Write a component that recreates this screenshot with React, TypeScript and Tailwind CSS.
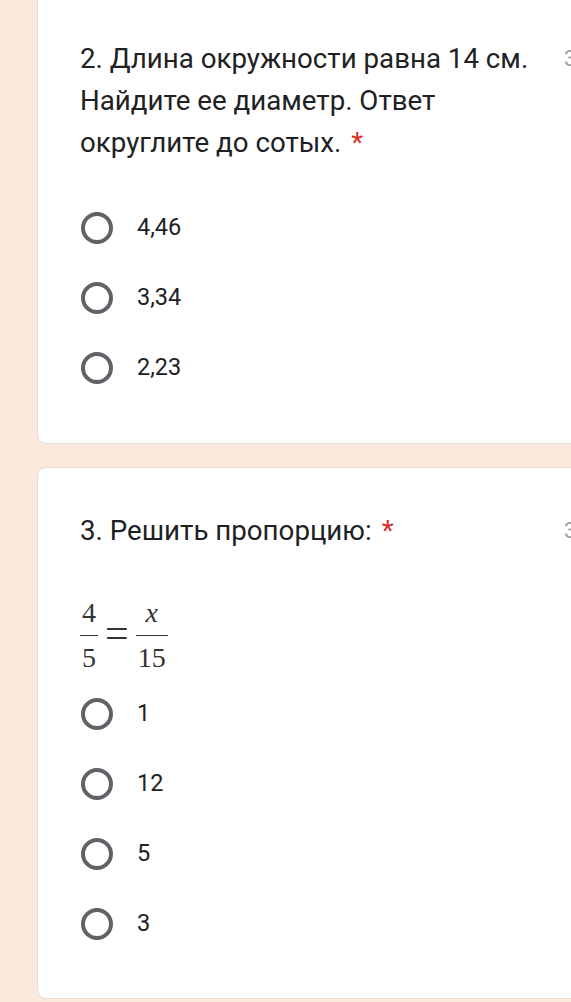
import React from "react";

const font = { fontFamily: "Roboto, 'Noto Sans', Arial, sans-serif" };

function Radio({ label }: { label: string }) {
  return (
    <div className="flex h-[70px] items-center">
      <div className="ml-[1px] h-[32px] w-[32px] shrink-0 rounded-full border-[4px] border-[#5f6368]" />
      <span className="ml-[24px] text-[23.5px] text-[#202124]">{label}</span>
    </div>
  );
}

function Title({ children }: { children: React.ReactNode }) {
  return (
    <div className="flex">
      <div className="w-[484px] shrink-0 pr-[12px] text-[27.7px] leading-[42px] text-[#202124]">
        {children}
        <span className="ml-[10px] text-[#d93025]">*</span>
      </div>
      <div className="text-[22px] leading-[42px] text-[#9aa0a6]">3 балла</div>
    </div>
  );
}

function Frac({ num, den, italic }: { num: string; den: string; italic?: boolean }) {
  return (
    <div className="flex flex-col items-center leading-none">
      <span className={`px-[2px] pb-[8px] text-[28px] ${italic ? "italic" : ""}`}>{num}</span>
      <div className="h-[1.5px] w-full bg-[#333]" />
      <span className="px-[2px] pt-[8px] text-[28px]">{den}</span>
    </div>
  );
}

export default function App() {
  return (
    <div className="w-[571px] h-[1002px] overflow-hidden bg-[#fce9dd]" style={font}>
      <div className="pl-[37px]">
        <div className="-mt-[10px] w-[640px] rounded-[9px] border border-[#e8dcd4] bg-white pl-[42px] pt-[47px] pb-[40px]">
          <Title>2. Длина окружности равна 14 см. Найдите ее диаметр. Ответ округлите до сотых.</Title>
          <div className="mt-[29px]">
            <Radio label="4,46" />
            <Radio label="3,34" />
            <Radio label="2,23" />
          </div>
        </div>
        <div className="mt-[23px] h-[532px] w-[640px] rounded-[9px] border border-[#e8dcd4] bg-white pl-[42px] pt-[42px]">
          <Title>3. Решить пропорцию:</Title>
          <div
            className="mt-[43px] mb-[3px] flex h-[81px] items-center text-[#333]"
            style={{ fontFamily: "'Liberation Serif', 'Times New Roman', serif" }}
          >
            <Frac num="4" den="5" />
            <span className="mx-[7px] -mt-[6px] text-[42px] leading-none">=</span>
            <Frac num="x" den="15" italic />
          </div>
          <div>
            <Radio label="1" />
            <Radio label="12" />
            <Radio label="5" />
            <Radio label="3" />
          </div>
        </div>
      </div>
    </div>
  );
}
